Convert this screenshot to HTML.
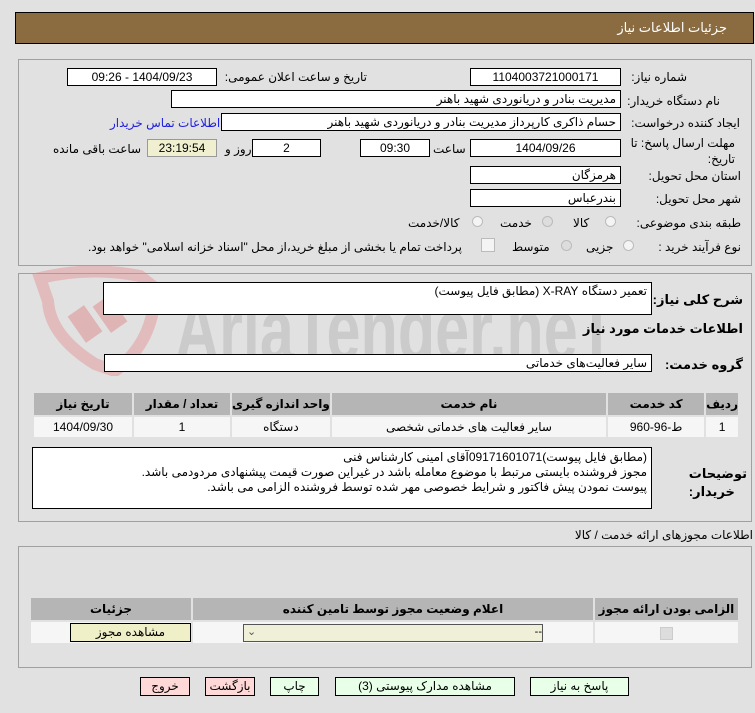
<!DOCTYPE html>
<html><head><meta charset="utf-8"><style>
body{margin:0;width:755px;height:713px;background:#e1e1e1;position:relative;overflow:hidden;font-family:"Liberation Sans","DejaVu Sans",sans-serif;font-size:12px;color:#000}
.a{position:absolute}
.box{position:absolute;background:#fff;border:1px solid #000;box-sizing:border-box;direction:rtl;padding:0 4px;line-height:16px;font-size:12px;white-space:nowrap;overflow:hidden}
.c{text-align:center}
.l{position:absolute;direction:rtl;white-space:nowrap;font-size:12px}
.panel{position:absolute;border:1px solid #a0a0a0;box-sizing:border-box}
.rad{position:absolute;width:11px;height:11px;border-radius:50%;border:1px solid #bbb;background:#f4f4f4;box-sizing:border-box}
table{border-collapse:collapse;position:absolute;direction:rtl}
td,th{border:2px solid #e1e1e1;font-size:12px;text-align:center;padding:0;white-space:nowrap}
th{background:#b5b5b5;font-weight:bold}
td{background:#f6f6f6}
.btn{position:absolute;border:1px solid #000;box-sizing:border-box;text-align:center;line-height:17px;font-size:12px;background:#e8ffe8}
</style></head><body>
<div class="a" style="left:15px;top:12px;width:739px;height:32px;background:#8b6c41;border:1px solid #000;box-sizing:border-box"></div>
<div class="l" style="right:28px;top:20px;color:#fff;font-size:13px">جزئیات اطلاعات نیاز</div>

<div class="panel" style="left:18px;top:59px;width:734px;height:207px"></div>
<!-- watermark -->
<svg class="a" style="left:20px;top:266px" width="600" height="110">
<path d="M20 12 Q70 0 120 10 L135 22 Q135 75 95 105 L75 98 Q30 70 28 35 Z" fill="none" stroke="#e2bcbc" stroke-width="12"/>
<rect x="55" y="42" width="20" height="32" fill="#dfb4b4" transform="rotate(-35 65 58)"/>
<rect x="80" y="32" width="20" height="32" fill="#dfb4b4" transform="rotate(-35 90 48)"/>
<text x="155" y="94" font-family="Liberation Sans" font-weight="bold" font-size="88" fill="#cbcbcb" textLength="440" lengthAdjust="spacingAndGlyphs">AriaTender.neT</text>
</svg>

<div class="l" style="right:68px;top:70px">شماره نیاز:</div>
<div class="box c" style="left:470px;top:68px;width:151px;height:18px">1104003721000171</div>
<div class="l" style="right:388px;top:70px">تاریخ و ساعت اعلان عمومی:</div>
<div class="box c" style="left:67px;top:68px;width:150px;height:18px">1404/09/23 - 09:26</div>

<div class="l" style="right:35px;top:94px">نام دستگاه خریدار:</div>
<div class="box" style="left:171px;top:90px;width:450px;height:18px">مدیریت بنادر و دریانوردی شهید باهنر</div>

<div class="l" style="right:15px;top:116px">ایجاد کننده درخواست:</div>
<div class="box" style="left:221px;top:113px;width:400px;height:18px">حسام  ذاکری کارپرداز مدیریت بنادر و دریانوردی شهید باهنر</div>
<div class="l" style="left:110px;top:116px;color:#2020e0">اطلاعات تماس خریدار</div>

<div class="l" style="right:20px;top:136px">مهلت ارسال پاسخ: تا</div>
<div class="l" style="right:20px;top:152px">تاریخ:</div>
<div class="box c" style="left:470px;top:139px;width:151px;height:18px">1404/09/26</div>
<div class="l" style="left:433px;top:142px">ساعت</div>
<div class="box c" style="left:360px;top:139px;width:70px;height:18px">09:30</div>
<div class="box c" style="left:252px;top:139px;width:69px;height:18px">2</div>
<div class="l" style="left:225px;top:142px">روز و</div>
<div class="box c" style="left:147px;top:139px;width:70px;height:18px;background:#f0f0d0;border-color:#999">23:19:54</div>
<div class="l" style="left:53px;top:142px">ساعت باقی مانده</div>

<div class="l" style="right:14px;top:169px">استان محل تحویل:</div>
<div class="box" style="left:470px;top:166px;width:151px;height:18px">هرمزگان</div>
<div class="l" style="right:14px;top:192px">شهر محل تحویل:</div>
<div class="box" style="left:470px;top:189px;width:151px;height:18px">بندرعباس</div>

<div class="l" style="right:14px;top:216px">طبقه بندی موضوعی:</div>
<div class="rad" style="left:605px;top:216px"></div><div class="l" style="left:573px;top:216px">کالا</div>
<div class="rad" style="left:542px;top:216px;background:#ddd"></div><div class="l" style="left:500px;top:216px">خدمت</div>
<div class="rad" style="left:472px;top:216px"></div><div class="l" style="left:408px;top:216px">کالا/خدمت</div>

<div class="l" style="right:14px;top:240px">نوع فرآیند خرید :</div>
<div class="rad" style="left:623px;top:240px"></div><div class="l" style="left:586px;top:240px">جزیی</div>
<div class="rad" style="left:561px;top:240px;background:#ddd"></div><div class="l" style="left:512px;top:240px">متوسط</div>
<div class="a" style="left:481px;top:238px;width:12px;height:12px;border:1px solid #bbb;background:#f4f4f4"></div>
<div class="l" style="left:88px;top:240px">پرداخت تمام یا بخشی از مبلغ خرید،از محل "اسناد خزانه اسلامی" خواهد بود.</div>

<div class="panel" style="left:18px;top:273px;width:734px;height:249px"></div>
<div class="l" style="right:12px;top:292px;font-weight:bold;font-size:13px">شرح کلی نیاز:</div>
<div class="box" style="left:103px;top:282px;width:549px;height:33px">تعمیر دستگاه X-RAY (مطابق فایل پیوست)</div>
<div class="l" style="right:12px;top:321px;font-weight:bold;font-size:13px">اطلاعات خدمات مورد نیاز</div>
<div class="l" style="right:12px;top:357px;font-weight:bold;font-size:13px">گروه خدمت:</div>
<div class="box" style="left:104px;top:354px;width:548px;height:18px">سایر فعالیت‌های خدماتی</div>

<table style="left:32px;top:391px;width:708px">
<tr style="height:24px"><th style="width:30px">ردیف</th><th style="width:96px">کد خدمت</th><th>نام خدمت</th><th style="width:96px">واحد اندازه گیری</th><th style="width:96px">تعداد / مقدار</th><th style="width:98px">تاریخ نیاز</th></tr>
<tr style="height:22px"><td>1</td><td>ط-96-960</td><td>سایر فعالیت های خدماتی شخصی</td><td>دستگاه</td><td>1</td><td>1404/09/30</td></tr>
</table>

<div class="l" style="right:8px;top:465px;font-weight:bold;font-size:13px;line-height:18px;text-align:left">توضیحات<br>خریدار:</div>
<div class="box" style="left:32px;top:447px;width:620px;height:62px;white-space:normal;line-height:15px;padding-top:2px">(مطابق فایل پیوست)09171601071آقای امینی کارشناس فنی<br>مجوز فروشنده بایستی مرتبط با موضوع معامله باشد در غیراین صورت قیمت پیشنهادی مردودمی باشد.<br>پیوست نمودن پیش فاکتور و شرایط خصوصی مهر شده توسط فروشنده الزامی می باشد.</div>

<div class="l" style="right:2px;top:528px">اطلاعات مجوزهای ارائه خدمت / کالا</div>
<div class="panel" style="left:18px;top:546px;width:734px;height:122px"></div>
<table style="left:29px;top:596px;width:711px">
<tr style="height:24px"><th style="width:143px">الزامی بودن ارائه مجوز</th><th>اعلام وضعیت مجوز توسط تامین کننده</th><th style="width:160px">جزئیات</th></tr>
<tr style="height:23px"><td><span style="display:inline-block;width:11px;height:11px;border:1px solid #ccc;background:#ddd;vertical-align:middle"></span></td><td><div style="margin:0 auto;width:298px;height:16px;border:1px solid #555;background:#f0f0d8;text-align:right;line-height:15px;font-size:11px;position:relative">--&nbsp;<span style="position:absolute;left:3px;color:#555">⌄</span></div></td><td><div style="margin:0 0 0 20px;width:119px;height:17px;border:1px solid #000;background:#f0f0c8;line-height:16px">مشاهده مجوز</div></td></tr>
</table>

<div class="btn" style="left:530px;top:677px;width:99px">پاسخ به نیاز</div>
<div class="btn" style="left:335px;top:677px;width:180px">مشاهده مدارک پیوستی (3)</div>
<div class="btn" style="left:270px;top:677px;width:49px">چاپ</div>
<div class="btn" style="left:205px;top:677px;width:50px;background:#ffd8d8">بازگشت</div>
<div class="btn" style="left:140px;top:677px;width:50px;background:#ffd8d8">خروج</div>
</body></html>
